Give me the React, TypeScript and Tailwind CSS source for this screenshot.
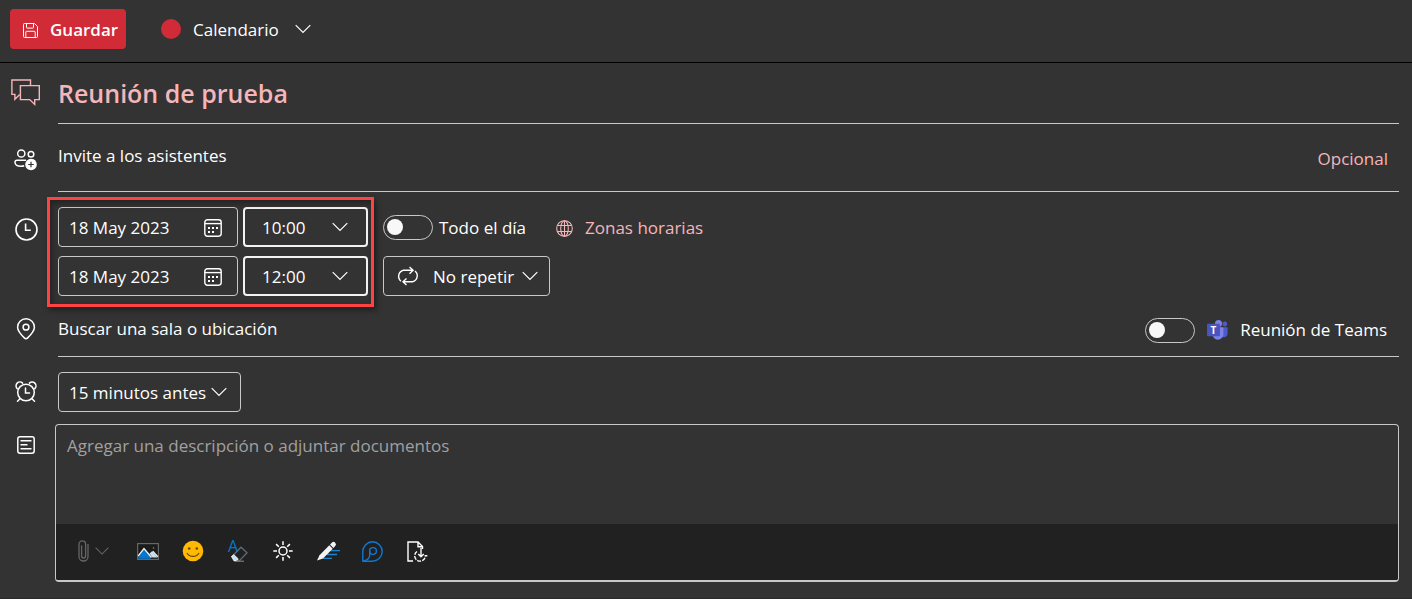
import { ReactNode, useState } from "react";

const ChevronIcon = ({ className = "" }: { className?: string }) => (
  <svg width="16" height="10" viewBox="0 0 16 10" fill="none" stroke="currentColor" strokeWidth="1.2" className={className}>
    <path d="M.7 1.2 8 8.5l7.3-7.3" />
  </svg>
);

const SaveIcon = () => (
  <svg width="15" height="15" viewBox="0 0 15 15" fill="none" stroke="currentColor" strokeWidth="1">
    <path d="M.5 1.5a1 1 0 0 1 1-1h10l3 3v10a1 1 0 0 1-1 1h-12a1 1 0 0 1-1-1z" />
    <path d="M3.5.5v4a.6.6 0 0 0 .6.6h5.8a.6.6 0 0 0 .6-.6v-4M2.8 14.5V9a.7.7 0 0 1 .7-.7h8a.7.7 0 0 1 .7.7v5.5" />
  </svg>
);

const ChatIcon = () => (
  <svg width="29" height="27" viewBox="0 0 29 27" fill="none" stroke="currentColor" strokeWidth="1.4">
    <path d="M19.5 6V1H.9v14.4h3v4.8l4.8-4.8" />
    <path d="M9.4 6.6h18.9v14h-4.6v4.8l-5-4.8H9.4z" />
  </svg>
);

const PeopleAddIcon = () => (
  <svg width="24" height="22" viewBox="0 0 24 22" fill="none" stroke="currentColor" strokeWidth="1.5">
    <circle cx="7.3" cy="4.5" r="3.6" />
    <circle cx="17" cy="5.3" r="2.8" />
    <path d="M12 11.2H3a2 2 0 0 0-2 2c0 2.6 2.2 4 6 4 1.3 0 2.3-.2 3.2-.5M15.5 11.2H19a2 2 0 0 1 1.8 1" />
    <circle cx="17" cy="15.5" r="5.8" fill="#fff" stroke="none" />
    <path d="M17 12.7v5.6M14.2 15.5h5.6" stroke="#333" strokeWidth="1.2" />
  </svg>
);

const ClockIcon = () => (
  <svg width="23" height="23" viewBox="0 0 23 23" fill="none" stroke="currentColor" strokeWidth="1.6">
    <circle cx="11.5" cy="11.5" r="10.5" />
    <path d="M10.6 5.5v6.8h5.2" />
  </svg>
);

const PinIcon = () => (
  <svg width="20" height="22" viewBox="0 0 20 22" fill="none" stroke="currentColor" strokeWidth="1.5">
    <path d="M10 20.7c-.5 0-1-.2-1.4-.6C4.5 16.2 1.6 13 1.6 9.2a8.4 8.4 0 0 1 16.8 0c0 3.8-2.9 7-7 10.9-.4.4-.9.6-1.4.6z" />
    <circle cx="10" cy="9.2" r="2.9" />
  </svg>
);

const AlarmIcon = () => (
  <svg width="22" height="22" viewBox="0 0 22 22" fill="none" stroke="currentColor" strokeWidth="1.5" strokeLinecap="round">
    <circle cx="11" cy="11.5" r="8.3" />
    <path d="M10.5 7v5h4" />
    <path d="M2.2 7.6A3.5 3.5 0 0 1 7.6 2.1M19.8 7.6A3.5 3.5 0 0 0 14.4 2.1M5 17.7l-2.5 2.5M17 17.7l2.5 2.5" />
  </svg>
);

const NotesIcon = () => (
  <svg width="18" height="18" viewBox="0 0 18 18" fill="none" stroke="currentColor" strokeWidth="1.5">
    <rect x=".8" y=".8" width="16.4" height="16.4" rx="2.2" />
    <path d="M3.5 4.7h11M3.5 8.7h7M3.5 12.7h11" />
  </svg>
);

const CalendarIcon = () => (
  <svg width="18" height="18" viewBox="0 0 18 18" fill="none" stroke="currentColor" strokeWidth="1.4">
    <rect x=".8" y=".8" width="16.4" height="16.4" rx="2.6" />
    <path d="M.8 4.6h16.4" />
    <g fill="currentColor" stroke="none">
      <rect x="4" y="8" width="2" height="2" />
      <rect x="8" y="8" width="2" height="2" />
      <rect x="12" y="8" width="2" height="2" />
      <rect x="4" y="12" width="2" height="2" />
      <rect x="8" y="12" width="2" height="2" />
    </g>
  </svg>
);

const GlobeIcon = () => (
  <svg width="17" height="17" viewBox="0 0 17 17" fill="none" stroke="currentColor" strokeWidth="1.1">
    <circle cx="8.5" cy="8.5" r="7.8" />
    <ellipse cx="8.5" cy="8.5" rx="3.8" ry="7.8" />
    <path d="M8.5.7v15.6M1.5 5.5h14M1.5 11.5h14" />
  </svg>
);

const RepeatIcon = () => (
  <svg width="22" height="20" viewBox="0 0 22 20" fill="none" stroke="currentColor" strokeWidth="1.4">
    <path d="M4 15.2A6.2 6.2 0 0 1 6.5 4.3H16M12.5 1l3.6 3.3-3.6 3.4" />
    <path d="M18 5a6.2 6.2 0 0 1-2.5 10.8H6M9.5 12.4 6 15.8l3.5 3.3" />
  </svg>
);

const TeamsIcon = () => (
  <svg width="21" height="20" viewBox="0 0 21 20" className="overflow-visible">
    <circle cx="11.5" cy="3.5" r="3.5" fill="#7b83eb" />
    <circle cx="17.8" cy="4" r="2.4" fill="#5059c9" />
    <path d="M14 7.3h5.6c.6 0 1 .4 1 1v5.2a3.8 3.8 0 0 1-6.6 2.6z" fill="#5059c9" />
    <path d="M6 7.3h9.5c.5 0 .9.4.9.9v6a5.5 5.5 0 0 1-11 0V8z" fill="#7b83eb" />
    <rect y="3.8" width="13" height="12.4" rx="1" fill="#4b53bc" />
    <text x="6.5" y="13.5" textAnchor="middle" fontSize="10" fontWeight="700" fill="#fff">T</text>
  </svg>
);

const ClipIcon = () => (
  <svg width="11" height="22" viewBox="0 0 11 22" fill="none" stroke="currentColor" strokeWidth="1.3">
    <path d="M10 4v12.5a4.5 4.5 0 0 1-9 0V4.2a3.3 3.3 0 0 1 6.6 0V16a2 2 0 0 1-4 0V5.5" />
  </svg>
);

const PictureIcon = () => (
  <svg width="22" height="17" viewBox="0 0 22 17">
    <rect x=".6" y=".6" width="20.8" height="15.8" fill="#1b1b1b" stroke="#666" strokeWidth="1.2" />
    <path d="M1.2 14.5 7 6l7 8.5-1 1.2H1.2z" fill="#0078d4" />
    <path d="M1.2 13 7 5.5l7.5 9M14 11l2.2-2.2 4.6 5" fill="none" stroke="#f3f3f3" strokeWidth="1.3" />
    <path d="M12.5 10.5 15 8.3l5.5 6.2h-5z" fill="#c7e0f4" />
    <circle cx="16.5" cy="5" r=".8" fill="#888" />
  </svg>
);

const SmileIcon = () => (
  <svg width="22" height="22" viewBox="0 0 22 22">
    <circle cx="11" cy="11" r="10.3" fill="#ffb900" />
    <circle cx="7.2" cy="8.5" r="1.3" fill="#5c4a1a" />
    <circle cx="14.8" cy="8.5" r="1.3" fill="#5c4a1a" />
    <path d="M5 13c2.6 4.6 9.4 4.6 12 0" fill="none" stroke="#5c4a1a" strokeWidth="1.2" />
  </svg>
);

const ClearFormatIcon = () => (
  <svg width="20" height="36" viewBox="0 -7 20 36" fill="none" className="overflow-visible">
    <text x="0" y="12" fontSize="16" fill="#0078d4">A</text>
    <path d="M4 16.5 13 7.2l6 5.5-7.5 8H8z" stroke="#5b6b7a" strokeWidth="1.3" />
    <path d="m3.5 16.5 2.3-1.8 4.5 4.2-2 2H6z" fill="#c7e0f4" stroke="#fff" strokeWidth=".8" />
    <path d="M8 21.2h8" stroke="#8a8886" />
  </svg>
);

const SunIcon = () => (
  <svg width="20" height="20" viewBox="0 0 20 20" fill="none" stroke="#fff" strokeWidth="1.5">
    <circle cx="10" cy="10" r="4" />
    <path d="M10 .3V4M10 16v3.7M.3 10H4M16 10h3.7M3.1 3.1l2.7 2.7M14.2 14.2l2.7 2.7M3.1 16.9l2.7-2.7M14.2 5.8l2.7-2.7" />
  </svg>
);

const PenIcon = () => (
  <svg width="24" height="20" viewBox="0 0 24 20" fill="none">
    <path d="M14 9.7h10M11 13.5h10M7 17.3h9" stroke="#1b86d2" strokeWidth="1.3" />
    <path d="m3.5 14.2 9.8-9.9 3.4 3.4L7 17.5l-6 1.9z" fill="#f3f3f3" />
    <path d="m14 3.5 1.8-1.8a2 2 0 0 1 3.4 3.4l-1.800 1.800z" fill="#f3f3f3" />
  </svg>
);

const LoopIcon = () => (
  <svg width="21" height="21" viewBox="0 0 21 21" fill="none" stroke="#0f78d4" strokeWidth="1.4">
    <path d="M.8 20.2v-9.700a9.700 9.700 0 1 1 9.700 9.700z" />
    <circle cx="11" cy="10" r="3.4" />
    <path d="M7.7 10v4.200c0 2.700-2.200 4.700-6 5.800" />
  </svg>
);

const TemplateIcon = () => (
  <svg width="21" height="21" viewBox="0 0 21 21" fill="none" stroke="#fff" strokeWidth="1.4">
    <path d="M6 20H1V1h10l4.5 4.5V8M11 1v4.8h4.5" />
    <path d="M14 7v8.500M11.300 13l2.700 2.700 2.800-2.700" />
    <path d="M10 10.500a5.300 5.300 0 1 0 8.300 4.200h2" strokeDasharray="4 1.200" />
  </svg>
);

interface RowProps {
  icon: ReactNode;
  railClass?: string;
  children: ReactNode;
}

const Row = ({ icon, railClass = "items-center", children }: RowProps) => (
  <div className="flex pr-[13px]">
    <div className={`flex w-[52px] shrink-0 justify-center ${railClass}`}>{icon}</div>
    {children}
  </div>
);

interface ToggleProps {
  id: string;
  checked: boolean;
  onChange: (value: boolean) => void;
}

const Toggle = ({ id, checked, onChange }: ToggleProps) => (
  <input
    id={id}
    type="checkbox"
    role="switch"
    checked={checked}
    onChange={(e) => onChange(e.target.checked)}
    className="flex h-[25px] w-[50px] shrink-0 appearance-none items-center rounded-full border border-[#c8c8c8] px-[3px] before:size-4 before:rounded-full before:bg-[#f8f8f8] checked:justify-end"
  />
);

interface DropdownProps {
  label: string;
  options: string[];
  className: string;
  chevronClass: string;
  icon?: ReactNode;
}

const Dropdown = ({ label, options, className, chevronClass, icon }: DropdownProps) => (
  <div className="relative flex items-center">
    {icon && <span className="pointer-events-none absolute left-[14px]">{icon}</span>}
    <select aria-label={label} className={`h-10 appearance-none rounded bg-transparent pt-[2px] ${className}`}>
      {options.map((option) => (
        <option key={option} className="bg-[#333]">
          {option}
        </option>
      ))}
    </select>
    <ChevronIcon className={`pointer-events-none absolute ${chevronClass}`} />
  </div>
);

const DateField = ({ label }: { label: string }) => {
  const [value, setValue] = useState("18 May 2023");
  return (
    <div className="flex h-10 items-center rounded border border-[#c8c8c8] pt-[2px] pr-[15px] pl-[10px]">
      <input
        type="text"
        aria-label={label}
        value={value}
        onChange={(e) => setValue(e.target.value)}
        className="w-full min-w-0 bg-transparent outline-none"
      />
      <button type="button" aria-label={`Abrir calendario: ${label}`}>
        <CalendarIcon />
      </button>
    </div>
  );
};

const tools = [
  { name: "Insertar imagen", icon: <PictureIcon /> },
  { name: "Emoji", icon: <SmileIcon /> },
  { name: "Borrar formato", icon: <ClearFormatIcon /> },
  { name: "Cambiar fondo", icon: <SunIcon /> },
  { name: "Editor", icon: <PenIcon /> },
  { name: "Componente de Loop", icon: <LoopIcon /> },
  { name: "Plantillas", icon: <TemplateIcon /> },
];

const App = () => {
  const [title, setTitle] = useState("Reunión de prueba");
  const [allDay, setAllDay] = useState(false);
  const [teams, setTeams] = useState(false);

  return (
    <div className="min-h-screen border-b border-[#292929] bg-[#333] font-['Open_Sans',sans-serif] text-[17px] leading-6 text-white">
      {/* Top bar */}
      <header className="flex items-center border-b border-black pt-[9px] pb-[13px] pl-[10px]">
        <button type="button" className="flex h-10 w-[116px] items-center gap-3 rounded-sm bg-[#d02b37] pt-[2px] pl-[13px] font-semibold">
          <SaveIcon />
          Guardar
        </button>
        <span className="ml-[35px] size-5 rounded-full bg-[#d02b37]" />
        <Dropdown label="Calendario" options={["Calendario"]} className="w-[130px] pl-3" chevronClass="right-0" />
      </header>

      {/* Title */}
      <Row icon={<span className="text-[#f4b6ba]"><ChatIcon /></span>} railClass="items-center pr-[2px] pb-[2px]">
        <input
          type="text"
          aria-label="Título"
          value={title}
          onChange={(e) => setTitle(e.target.value)}
          className="ml-[6px] h-[61px] min-w-0 flex-1 border-b border-[#c8c8c8] bg-transparent text-[25px] font-semibold text-[#f4b6ba] outline-none"
        />
      </Row>

      {/* Attendees */}
      <Row icon={<PeopleAddIcon />} railClass="items-center pt-1">
        <div className="ml-[6px] flex h-[68px] flex-1 items-center border-b border-[#c8c8c8] pt-[2px] pr-[11px]">
          <input
            type="text"
            aria-label="Asistentes"
            placeholder="Invite a los asistentes"
            className="min-w-0 flex-1 bg-transparent pb-[6px] placeholder-white outline-none"
          />
          <button type="button" className="text-[#f4b6ba]">Opcional</button>
        </div>
      </Row>

      {/* Date and time */}
      <Row icon={<ClockIcon />} railClass="items-start pt-[26px]">
        <div className="ml-[6px] flex pt-[15px]">
          <div className="relative grid grid-cols-[180px_125px] gap-x-[5px] gap-y-[9px]">
            <DateField label="Fecha de inicio" />
            <Dropdown label="Hora de inicio" options={["10:00", "10:30"]} className="w-full border-2 border-[#f3f3f3] pl-[17px]" chevronClass="right-5" />
            <DateField label="Fecha de fin" />
            <Dropdown label="Hora de fin" options={["12:00", "12:30"]} className="w-full border-2 border-[#f3f3f3] pl-[17px]" chevronClass="right-5" />
            <div className="pointer-events-none absolute -top-[10px] -right-[6px] -bottom-[11px] -left-[11px] border-3 border-[#ff4343] shadow-[2px_3px_6px_rgba(0,0,0,0.45),inset_2px_3px_6px_rgba(0,0,0,0.35)]" />
          </div>
          <div className="ml-[15px] flex flex-col items-start gap-[9px]">
            <div className="flex h-10 items-center">
              <Toggle id="all-day" checked={allDay} onChange={setAllDay} />
              <label htmlFor="all-day" className="ml-[6px] pt-[2px]">Todo el día</label>
              <button type="button" className="ml-[30px] flex items-center gap-3 pt-[2px] text-[#f4b6ba]">
                <GlobeIcon />
                Zonas horarias
              </button>
            </div>
            <Dropdown
              label="Repetir"
              options={["No repetir", "Cada día"]}
              className="w-[167px] border border-[#c8c8c8] pl-[49px]"
              chevronClass="right-3"
              icon={<RepeatIcon />}
            />
          </div>
        </div>
      </Row>

      {/* Location */}
      <Row icon={<PinIcon />} railClass="items-center pt-1">
        <div className="ml-[6px] flex h-[61px] flex-1 items-center border-b border-[#c8c8c8] pt-2 pr-3">
          <input
            type="text"
            aria-label="Ubicación"
            placeholder="Buscar una sala o ubicación"
            className="min-w-0 flex-1 bg-transparent pb-[2px] placeholder-white outline-none"
          />
          <Toggle id="teams" checked={teams} onChange={setTeams} />
          <label htmlFor="teams" className="ml-3 flex items-center gap-3">
            <TeamsIcon />
            Reunión de Teams
          </label>
        </div>
      </Row>

      {/* Reminder */}
      <Row icon={<AlarmIcon />} railClass="items-center pt-[14px]">
        <div className="ml-[6px] pt-[15px]">
          <Dropdown
            label="Recordatorio"
            options={["15 minutos antes", "30 minutos antes"]}
            className="w-[183px] border border-[#c8c8c8] pl-[10px]"
            chevronClass="right-[14px]"
          />
        </div>
      </Row>

      {/* Description */}
      <Row icon={<NotesIcon />} railClass="items-start pt-6">
        <div className="mt-3 ml-[3px] flex flex-1 flex-col overflow-hidden rounded border border-b-2 border-[#c8c8c8]">
          <textarea
            aria-label="Descripción"
            placeholder="Agregar una descripción o adjuntar documentos"
            className="block h-[99px] w-full resize-none bg-transparent px-[11px] py-[9px] placeholder-[#a0a0a0] outline-none"
          />
          <div className="flex h-14 items-center bg-[#212121] pb-[2px]">
            <button type="button" aria-label="Adjuntar" className="flex w-[69px] items-center gap-[6px] pl-[22px] text-[#666]">
              <ClipIcon />
              <ChevronIcon className="w-[14px]" />
            </button>
            {tools.map((tool) => (
              <button key={tool.name} type="button" aria-label={tool.name} className="flex w-[45px] justify-center">
                {tool.icon}
              </button>
            ))}
          </div>
        </div>
      </Row>
    </div>
  );
};

export default App;
